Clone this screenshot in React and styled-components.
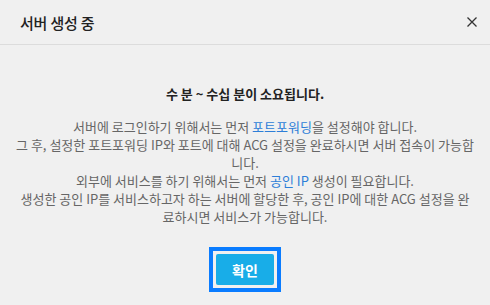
import React from 'react';
import styled, { createGlobalStyle } from 'styled-components';

const GlobalStyle = createGlobalStyle`
  html, body {
    margin: 0;
    padding: 0;
    background: #f0f0f0;
  }
  body {
    font-family: 'Noto Sans CJK KR', 'Noto Sans', sans-serif;
  }
`;

const Modal = styled.div`
  width: 490px;
  height: 305px;
  background: #f0f0f0;
  display: flex;
  flex-direction: column;
`;

const Header = styled.div`
  height: 45px;
  box-sizing: border-box;
  border-bottom: 1px solid #dcdcdc;
  display: flex;
  align-items: center;
  justify-content: space-between;
  padding: 0 13px 0 20px;
`;

const Title = styled.h2`
  margin: 0;
  font-size: 15px;
  font-weight: 500;
  color: #222;
  letter-spacing: -0.2px;
`;

const CloseButton = styled.button`
  border: 0;
  background: none;
  padding: 0;
  width: 10px;
  height: 10px;
  display: flex;
  cursor: pointer;
`;

const Body = styled.div`
  padding: 40px 15px 0;
  text-align: center;
`;

const Lead = styled.p`
  margin: 0 0 15px;
  font-size: 13px;
  line-height: 18px;
  font-weight: 700;
  color: #222;
`;

const Paragraph = styled.p`
  margin: 0;
  font-size: 13px;
  line-height: 18px;
  color: #666;
`;

const Link = styled.a`
  color: #2d7ed8;
  text-decoration: none;
`;

const Footer = styled.div`
  display: flex;
  justify-content: center;
  margin-top: 21px;
`;

const FocusRing = styled.div`
  display: flex;
  padding: 3px;
  border: 4px solid #0a7cff;
`;

const ConfirmButton = styled.button`
  width: 58px;
  height: 31px;
  border: 0;
  border-radius: 2px;
  background: #18ade8;
  color: #fff;
  font-family: inherit;
  font-size: 14px;
  font-weight: 700;
  outline: none;
  cursor: pointer;
`;

const CloseIcon = () => (
  <svg width="10" height="10" viewBox="0 0 10 10">
    <path d="M0.5 0.5 L9.5 9.5 M9.5 0.5 L0.5 9.5" stroke="#333" strokeWidth="1.3" fill="none" />
  </svg>
);

export default function App() {
  return (
    <>
      <GlobalStyle />
      <Modal>
        <Header>
          <Title>서버 생성 중</Title>
          <CloseButton aria-label="닫기">
            <CloseIcon />
          </CloseButton>
        </Header>
        <Body>
          <Lead>수 분 ~ 수십 분이 소요됩니다.</Lead>
          <Paragraph>
            서버에 로그인하기 위해서는 먼저 <Link href="#">포트포워딩</Link>을 설정해야 합니다.
            <br />
            그 후, 설정한 포트포워딩 IP와 포트에 대해 ACG 설정을 완료하시면 서버 접속이 가능합니다.
          </Paragraph>
          <Paragraph>
            외부에 서비스를 하기 위해서는 먼저 <Link href="#">공인 IP</Link> 생성이 필요합니다.
            <br />
            생성한 공인 IP를 서비스하고자 하는 서버에 할당한 후, 공인 IP에 대한 ACG 설정을 완료하시면 서비스가 가능합니다.
          </Paragraph>
          <Footer>
            <FocusRing>
              <ConfirmButton>확인</ConfirmButton>
            </FocusRing>
          </Footer>
        </Body>
      </Modal>
    </>
  );
}
